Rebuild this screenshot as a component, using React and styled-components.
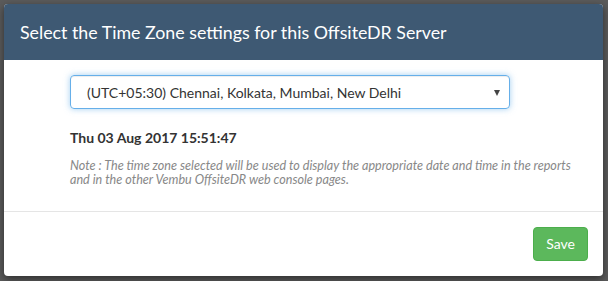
import React from 'react';
import styled, { createGlobalStyle } from 'styled-components';

const GlobalStyle = createGlobalStyle`
    html, body {
        margin:0;
        padding:0;
        background:#5b5b5b;
        font-family:Lato, "Open Sans", sans-serif;
    }
`;

const Backdrop = styled.div`
    width:608px;
    height:281px;
    padding:4px 5px 5px 4px;
    box-sizing:border-box;
    background:#5b5b5b;
`;

const Modal = styled.div`
    background:#fff;
    border-radius:4px;
    overflow:hidden;
    box-shadow:0 3px 9px rgba(0,0,0,0.5);
    display:flex;
    flex-direction:column;
    height:272px;
`;

const Header = styled.div`
    background:#3e5973;
    padding:15px 16px;
    height:56px;
    box-sizing:border-box;
    display:flex;
    align-items:center;

    h4{
        margin:0;
        color:#fff;
        font-size:17.8px;
        font-weight:400;
        line-height:26px;
    }
`;

const Body = styled.div`
    padding:15px 15px 0 66px;
    height:152px;
    box-sizing:border-box;
    border-bottom:1px solid #e5e5e5;
`;

const SelectBox = styled.div`
    width:440px;
    height:34px;
    box-sizing:border-box;
    border:1px solid #66afe9;
    border-radius:4px;
    box-shadow:inset 0 1px 1px rgba(0,0,0,0.075), 0 0 6px rgba(102,175,233,0.6);
    display:flex;
    align-items:center;
    justify-content:space-between;
    padding:0 9px 0 16px;
    font-size:14px;
    color:#333;
`;

const Caret = styled.span`
    width:0;
    height:0;
    border-left:3.5px solid transparent;
    border-right:3.5px solid transparent;
    border-top:6px solid #444;
    margin-top:2px;
`;

const DateText = styled.div`
    margin-top:19px;
    font-size:14px;
    font-weight:700;
    line-height:20px;
    color:#333;
`;

const Note = styled.p`
    margin:11px 0 0;
    width:512px;
    font-size:12.6px;
    font-style:italic;
    line-height:14px;
    color:#888;
`;

const Footer = styled.div`
    flex:1;
    display:flex;
    justify-content:flex-end;
    align-items:flex-start;
    padding:15px 15px;
`;

const Button = styled.button`
    background:${props => props.bg};
    border:1px solid ${props => props.border};
    color:#fff;
    border-radius:4px;
    font-family:Lato, sans-serif;
    font-size:14px;
    line-height:20px;
    padding:6px 12px;
    height:34px;
`;

const App = () => {
    return (
        <>
        <GlobalStyle/>
        <Backdrop>
            <Modal>
                <Header>
                    <h4>Select the Time Zone settings for this OffsiteDR Server</h4>
                </Header>
                <Body>
                    <SelectBox>
                        <span>(UTC+05:30) Chennai, Kolkata, Mumbai, New Delhi</span>
                        <Caret/>
                    </SelectBox>
                    <DateText>Thu 03 Aug 2017 15:51:47</DateText>
                    <Note>Note : The time zone selected will be used to display the appropriate date and time in the reports and in the other Vembu OffsiteDR web console pages.</Note>
                </Body>
                <Footer>
                    <Button bg="#5cb85c" border="#4cae4c">Save</Button>
                </Footer>
            </Modal>
        </Backdrop>
        </>
    )
}

export default App;
